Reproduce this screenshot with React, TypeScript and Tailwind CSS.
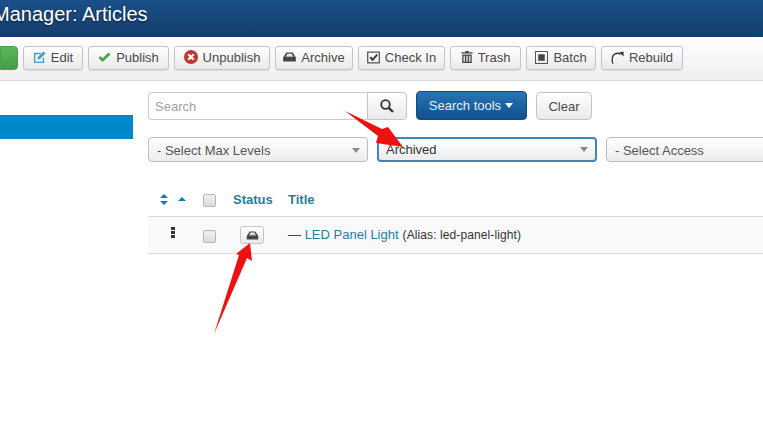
import type { ReactNode } from "react";

const font = { fontFamily: '"Liberation Sans", Arial, sans-serif' };

function ArchiveIcon({ className }: { className?: string }) {
  return (
    <svg viewBox="0 0 14 11" className={className} fill="currentColor">
      <path d="M3.5 0.500h7L14 6V10.500H0V6z M3.200 5h7.600l-1.400-3.200H4.600z" fillRule="evenodd" />
      <rect x="2.800" y="4" width="8.400" height="1.600" fill="#b0b0b0" />
    </svg>
  );
}

const toolbarButtons: { label: string; width: string; icon: ReactNode }[] = [
  {
    label: "Edit",
    width: "w-[60px]",
    icon: (
      <svg viewBox="0 0 14 14" className="w-[13px] h-[13px] text-[#4a9cc4]" fill="currentColor">
        <path fillRule="evenodd" d="M1 2h8L7.500 3.500H2.500v8h8V8L12 6.500V13H1z" />
        <path d="M11.200 0.600L13.400 2.800 7.200 9H5V6.800z" />
      </svg>
    ),
  },
  {
    label: "Publish",
    width: "w-[81px]",
    icon: (
      <svg viewBox="0 0 14 12" className="w-[13px] h-[11px] text-[#46a546]" fill="currentColor">
        <path d="M0.500 6.500L2.600 4.400 5 6.800 11.400 0.500 13.500 2.600 5 11z" />
      </svg>
    ),
  },
  {
    label: "Unpublish",
    width: "w-[96px]",
    icon: (
      <svg viewBox="0 0 14 14" className="w-[14px] h-[14px]">
        <circle cx="7" cy="7" r="7" fill="#bd362f" />
        <path d="M4.200 4.200L9.800 9.800M9.800 4.200L4.200 9.800" stroke="#fff" strokeWidth="2.200" />
      </svg>
    ),
  },
  {
    label: "Archive",
    width: "w-[78px]",
    icon: <ArchiveIcon className="w-[13px] h-[10px] text-[#444]" />,
  },
  {
    label: "Check In",
    width: "w-[87px]",
    icon: (
      <svg viewBox="0 0 14 14" className="w-[13px] h-[13px] text-[#333]" fill="none" stroke="currentColor">
        <rect x="0.800" y="1.200" width="12.400" height="11.600" strokeWidth="1.100" />
        <path d="M3.500 6.500L6 9.500 11 4" strokeWidth="2" />
      </svg>
    ),
  },
  {
    label: "Trash",
    width: "w-[71px]",
    icon: (
      <svg viewBox="0 0 14 14" className="w-[12px] h-[14px] text-[#444]" fill="currentColor">
        <path fillRule="evenodd" d="M5 0h4v1.500h4.500V3h-13V1.500H5z M1.500 4h11v10h-11z M3 5.500v7h1.500v-7z M6.200 5.500v7h1.600v-7z M9.500 5.500v7H11v-7z" />
      </svg>
    ),
  },
  {
    label: "Batch",
    width: "w-[70px]",
    icon: (
      <svg viewBox="0 0 14 14" className="w-[13px] h-[13px] text-[#444]">
        <rect x="0.600" y="0.600" width="12.800" height="12.800" fill="none" stroke="currentColor" strokeWidth="1" />
        <rect x="3.500" y="3.500" width="7" height="7" fill="currentColor" />
      </svg>
    ),
  },
  {
    label: "Rebuild",
    width: "w-[82px]",
    icon: (
      <svg viewBox="0 0 14 14" className="w-[13px] h-[13px] text-[#333]" fill="none">
        <path d="M2.300 13.500A6 6 0 0 1 1.500 8.500 5.500 5.500 0 0 1 10.500 3.800" stroke="currentColor" strokeWidth="1.400" />
        <path d="M9 1L13.500 0.800 13.500 5.800z" fill="currentColor" />
      </svg>
    ),
  },
];

function Caret({ className }: { className: string }) {
  return <span className={`w-0 h-0 border-x-[4px] border-x-transparent border-t-[5px] ${className}`} />;
}

function SelectBox({ label, focused }: { label: string; focused?: boolean }) {
  return (
    <div
      className={
        "w-[220px] shrink-0 h-[25px] flex items-center justify-between rounded-[4px] bg-gradient-to-b from-white to-[#ececec] pr-[7px] text-[13px] " +
        (focused ? "border-2 border-[#3d87bb] pl-[7px] text-[#333]" : "border border-[#bbbbbb] pl-[8px] pt-[2px] text-[#555]")
      }
    >
      <span>{label}</span>
      <Caret className="border-t-[#888]" />
    </div>
  );
}

function Checkbox() {
  return <span className="block mt-[2px] w-[13px] h-[13px] rounded-[2px] border border-[#b5b5b5] bg-gradient-to-b from-[#f0f0f0] to-[#dcdcdc]" />;
}

export default function App() {
  return (
    <div className="relative w-[763px] h-[440px] overflow-hidden bg-white text-[#333]" style={font}>
      <header className="h-[37px] bg-gradient-to-b from-[#1a5088] to-[#153d6c] overflow-hidden">
        <h1 className="ml-[-7px] text-[20px] leading-[28px] whitespace-nowrap text-white [text-shadow:0_1px_2px_rgba(0,0,0,0.6)]">
          Manager: Articles
        </h1>
      </header>

      <div className="h-[44px] pt-[9px] border-b border-[#d6d6d6] bg-gradient-to-b from-white to-[#efefef] flex gap-[5px] overflow-hidden">
        <div className="w-[18px] h-[24px] rounded-r-[4px] border border-[#4f9a4f] bg-gradient-to-b from-[#5cb85c] to-[#459c45]" />
        {toolbarButtons.map((b) => (
          <button
            key={b.label}
            className={`${b.width} h-[24px] pb-[2px] flex items-center justify-center gap-[5px] rounded-[3px] border border-[#c4c4c4] bg-gradient-to-b from-white to-[#e9e9e9] text-[13px] leading-none text-[#4a4a4a] shadow-[0_1px_1px_rgba(0,0,0,0.08)]`}
          >
            {b.icon}
            <span>{b.label}</span>
          </button>
        ))}
      </div>

      <div className="flex">
        <aside className="w-[133px] shrink-0 pt-[34px]">
          <div className="h-[24px] bg-[#0088cc]" />
        </aside>

        <main className="ml-[15px] flex-1 min-w-0">
          <div className="flex items-start pt-[10px]">
            <div className="mt-[1px] w-[219px] h-[28px] flex items-center pl-[6px] pt-[1px] rounded-l-[4px] border border-r-0 border-[#cccccc] text-[13px] text-[#a0a0a0]">
              Search
            </div>
            <button className="mt-[1px] w-[40px] h-[28px] flex items-center justify-center rounded-r-[4px] border border-[#c4c4c4] bg-gradient-to-b from-white to-[#e9e9e9]">
              <svg viewBox="0 0 14 14" className="w-[14px] h-[14px] text-[#333]" fill="none" stroke="currentColor">
                <circle cx="5.500" cy="5.500" r="4.300" strokeWidth="1.800" />
                <path d="M8.800 8.800L13 13" strokeWidth="2.400" />
              </svg>
            </button>
            <button className="ml-[9px] w-[111px] h-[29px] pr-[1px] flex items-center justify-center gap-[4px] rounded-[4px] border border-[#12497f] bg-gradient-to-b from-[#2a74b4] to-[#10508e] text-[13px] text-[#e4eef7]">
              Search tools
              <Caret className="border-t-white" />
            </button>
            <button className="mt-[1px] ml-[9px] w-[56px] h-[28px] pt-[1px] rounded-[4px] border border-[#c4c4c4] bg-gradient-to-b from-white to-[#e9e9e9] text-[13px] text-[#4a4a4a]">
              Clear
            </button>
          </div>

          <div className="mt-[17px] flex gap-[9px]">
            <SelectBox label="- Select Max Levels" />
            <SelectBox label="Archived" focused />
            <SelectBox label="- Select Access" />
          </div>

          <div className="mt-[20px] h-[35px] grid grid-cols-[55px_30px_55px_1fr] items-center border-b border-[#dddddd] text-[13px] font-bold text-[#1f7f9f]">
            <div className="flex items-center pl-[12px] gap-[10px]">
              <svg viewBox="0 0 8 11" className="w-[8px] h-[11px] text-[#0f7fb8]" fill="currentColor">
                <path d="M4 0L8 4H0z M0 7h8L4 11z" />
              </svg>
              <svg viewBox="0 0 8 4" className="w-[8px] h-[4px] text-[#0f7fb8]" fill="currentColor">
                <path d="M4 0L8 4H0z" />
              </svg>
            </div>
            <Checkbox />
            <span className="pt-[1px]">Status</span>
            <span className="pt-[1px]">Title</span>
          </div>

          <div className="h-[37px] grid grid-cols-[55px_30px_55px_1fr] items-center border-b border-[#dddddd] bg-[#f9f9f9] whitespace-nowrap">
            <div className="pl-[23px] flex flex-col gap-[1px] mb-[5px]">
              <span className="w-[4px] h-[3px] bg-[#333]" />
              <span className="w-[4px] h-[3px] bg-[#333]" />
              <span className="w-[4px] h-[3px] bg-[#333]" />
            </div>
            <Checkbox />
            <button className="w-[24px] h-[18px] ml-[7px] flex items-center justify-center rounded-[3px] border border-[#c4c4c4] bg-gradient-to-b from-white to-[#e9e9e9]">
              <ArchiveIcon className="w-[13px] h-[9px] text-[#444]" />
            </button>
            <div className="mb-[2px]">
              <span className="text-[13px] text-[#444]">— </span>
              <span className="text-[13px] text-[#1f7f9f]">LED Panel Light</span>
              <span className="ml-[4px] text-[12px] tracking-[0.1px] text-[#333]">(Alias: led-panel-light)</span>
            </div>
          </div>
        </main>
      </div>

      <svg viewBox="0 0 763 440" className="absolute inset-0 w-[763px] h-[440px] pointer-events-none">
        <polygon points="345,111 382,129 388,127 403,147 376,143 378,136" fill="#f01010" />
        <polygon points="214,334 239,255 236,254 250,243 252,261 247,258" fill="#f01010" />
      </svg>
    </div>
  );
}
